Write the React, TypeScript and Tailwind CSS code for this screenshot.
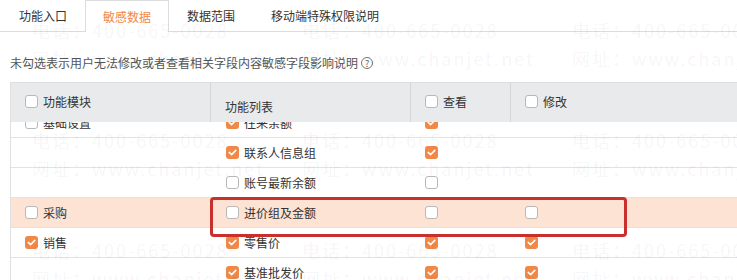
import type { ReactNode } from "react";

type Row = {
  mod?: string;
  modOn?: boolean;
  fn: string;
  fnOn: boolean;
  view: boolean;
  edit?: boolean;
  hl?: boolean;
};

const rows: Row[] = [
  { mod: "基础设置", modOn: false, fn: "往来余额", fnOn: true, view: true },
  { fn: "联系人信息组", fnOn: true, view: true },
  { fn: "账号最新余额", fnOn: false, view: false },
  { mod: "采购", modOn: false, fn: "进价组及金额", fnOn: false, view: false, edit: false, hl: true },
  { mod: "销售", modOn: true, fn: "零售价", fnOn: true, view: true, edit: true },
  { fn: "基准批发价", fnOn: true, view: true, edit: true },
];

const tabs = ["功能入口", "敏感数据", "数据范围", "移动端特殊权限说明"];

const Check = ({ on }: { on?: boolean }) =>
  on ? (
    <span className="w-[13px] h-[13px] rounded-[3px] bg-[#f08848] flex items-center justify-center shrink-0">
      <svg width="9" height="7" viewBox="0 0 9 7">
        <path d="M1.2 3.4 L3.6 5.6 L7.8 1.4" stroke="#fff" strokeWidth="1.5" fill="none" strokeLinecap="round" strokeLinejoin="round" />
      </svg>
    </span>
  ) : (
    <span className="w-[13px] h-[13px] rounded-[3px] border border-[#b8b8b8] bg-white shrink-0" />
  );

const Cell = ({ children, className = "" }: { children?: ReactNode; className?: string }) => (
  <div className={"flex items-center gap-[5px] pl-[14px] " + className}>{children}</div>
);

const App = () => {
  return (
    <div
      className="relative w-[737px] h-[280px] overflow-hidden bg-white text-[12px] text-[#333]"
      style={{ fontFamily: '"Noto Sans CJK SC", "Noto Sans", sans-serif' }}
    >
      {/* 页签 */}
      <div className="flex h-[32px] border-b border-[#dcdcdc] pl-[1px]">
        {tabs.map((t, i) => (
          <div
            key={t}
            className={
              i === 1
                ? "px-[17px] flex items-center border border-b-0 border-[#dcdcdc] bg-white text-[#f08848] h-[32px] mb-[-1px]"
                : "px-[17px] flex items-center border border-transparent h-[32px]"
            }
          >
            {t}
          </div>
        ))}
      </div>

      {/* 说明 */}
      <div className="flex items-center h-[30px] mt-[16px] pl-[10px] text-[#555]">
        未勾选表示用户无法修改或者查看相关字段内容敏感字段影响说明
        <span className="ml-[3px] w-[12px] h-[12px] rounded-full border border-[#777] text-[9px] leading-none flex items-center justify-center text-[#666]">
          ?
        </span>
      </div>

      {/* 表格 */}
      <div className="ml-[10px] mt-[4px] w-[760px] border-l border-[#e0e0e0]">
        <div className="grid grid-cols-[200px_200px_100px_1fr] h-[40px] bg-[#e9eaeb] border-t border-[#dedede]">
          <Cell className="border-r border-[#d6d6d6] pb-[2px]">
            <Check />
            功能模块
          </Cell>
          <Cell className="border-r border-[#d6d6d6] pt-[8px]">功能列表</Cell>
          <Cell className="border-r border-[#d6d6d6] pl-[13px] pb-[2px]">
            <Check />
            查看
          </Cell>
          <Cell className="pl-[13px] pb-[2px]">
            <Check />
            修改
          </Cell>
        </div>

        <div className="h-[158px] overflow-hidden">
          <div className="mt-[-14px]">
            {rows.map((r, i) => (
              <div
                key={i}
                className={
                  "grid grid-cols-[200px_200px_100px_1fr] h-[30px] border-b border-[#e3e3e3] " +
                  (r.hl ? "bg-[#fde3d4]" : "bg-white")
                }
              >
                <Cell>
                  {r.mod && (
                    <>
                      <Check on={r.modOn} />
                      {r.mod}
                    </>
                  )}
                </Cell>
                <Cell className="pl-[15px]">
                  <Check on={r.fnOn} />
                  {r.fn}
                </Cell>
                <Cell className="pl-[13px]">
                  <Check on={r.view} />
                </Cell>
                <Cell className="pl-[13px]">{r.edit !== undefined && <Check on={r.edit} />}</Cell>
              </div>
            ))}
          </div>
        </div>
      </div>

      {/* 水印 */}
      <div className="pointer-events-none absolute left-[32px] top-[18px] grid grid-cols-[repeat(3,270px)] auto-rows-[110px] text-[18px] tracking-[2px] text-black/[0.055]">
        {Array.from({ length: 9 }).map((_, i) => (
          <div key={i} className="flex flex-col whitespace-nowrap leading-[24px] gap-[4px]">
            <span>电话：400-665-0028</span>
            <span>网址：www.chanjet.net</span>
          </div>
        ))}
      </div>

      {/* 标注框 */}
      <div className="pointer-events-none absolute left-[210px] top-[197px] w-[417px] h-[40px] border-[3px] border-[#c9302c] rounded-[4px]" />
    </div>
  );
};

export default App;
